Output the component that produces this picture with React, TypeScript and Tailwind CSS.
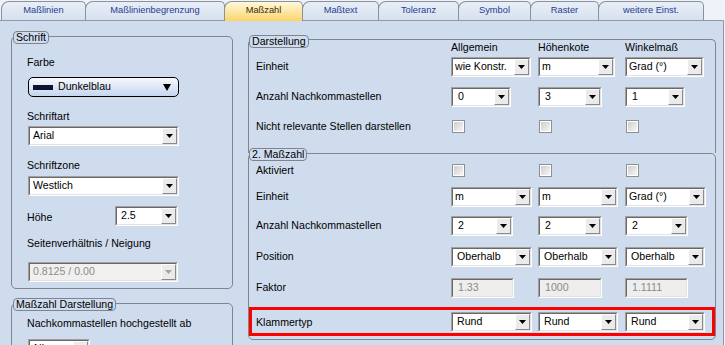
import React from 'react';

// --- small widgets ---
const Arrow: React.FC<{ disabled?: boolean }> = ({ disabled }) => (
  <svg width="7" height="4" viewBox="0 0 7 4">
    <path d="M0 0h7L3.5 4z" fill={disabled ? '#a5a5a5' : '#000'} />
  </svg>
);

interface SelectProps {
  value: string;
  className?: string;
  pad?: string;
  disabled?: boolean;
}

const Select: React.FC<SelectProps> = ({ value, className = '', pad = 'pl-[2px]', disabled = false }) => (
  <div className={`flex h-[20px] border border-t-[#a0a0a0] border-l-[#a0a0a0] border-r-white border-b-white ${className}`}>
    <div
      className={`flex min-w-0 flex-1 border border-t-[#696969] border-l-[#696969] border-r-[#e3e3e3] border-b-[#e3e3e3] ${
        disabled ? 'bg-[#f0f0f0]' : 'bg-white'
      }`}
    >
      <span className={`flex-1 truncate leading-[15px] ${pad} ${disabled ? 'text-[#8c8c8c]' : 'text-black'}`}>{value}</span>
      <span className="flex w-[15px] items-center justify-center border border-t-white border-l-white border-r-[#8a8a8a] border-b-[#8a8a8a] bg-[#ebebeb]">
        <Arrow disabled={disabled} />
      </span>
    </div>
  </div>
);

const TextBox: React.FC<{ value: string; className?: string }> = ({ value, className = '' }) => (
  <div className={`flex h-[20px] border border-t-[#a0a0a0] border-l-[#a0a0a0] border-r-white border-b-white ${className}`}>
    <div className="flex-1 border border-t-[#696969] border-l-[#696969] border-r-[#e3e3e3] border-b-[#e3e3e3] bg-[#eeeeee] pl-[5px] leading-[15px] text-[#8a8a8a]">
      {value}
    </div>
  </div>
);

const Check: React.FC = () => (
  <div className="ml-[1px] h-[13px] w-[13px] border border-[#8e8f8f] bg-white p-px">
    <div className="h-full w-full bg-linear-to-br from-[#cfcfcf] to-[#f6f6f6]" />
  </div>
);

const Legend: React.FC<{ children: React.ReactNode; className?: string }> = ({ children, className = '' }) => (
  <div className={`absolute h-[13px] rounded-[4px] border border-[#7d848e] bg-[#cfdcee] px-[2px] leading-[11px] text-black ${className}`}>
    {children}
  </div>
);

const Row: React.FC<{ label: string; children: React.ReactNode; className?: string }> = ({ label, children, className = '' }) => (
  <div className={`grid h-[21px] grid-cols-[195px_87px_87px_1fr] items-center ${className}`}>
    <span>{label}</span>
    {children}
  </div>
);

// --- tabs ---
const tabs = [
  { label: 'Maßlinien', w: 'w-[85px]' },
  { label: 'Maßlinienbegrenzung', w: 'w-[140px]' },
  { label: 'Maßzahl', w: 'w-[79px]', active: true },
  { label: 'Maßtext', w: 'w-[77px]' },
  { label: 'Toleranz', w: 'w-[81px]' },
  { label: 'Symbol', w: 'w-[73px]' },
  { label: 'Raster', w: 'w-[69px]' },
  { label: 'weitere Einst.', w: 'w-[106px]' },
];

export default function App() {
  return (
    <div className="h-[345px] w-[725px] overflow-hidden bg-[#eef3f9] font-['Liberation_Sans',Arial,sans-serif] text-[10.6px] text-black">
      {/* tab strip */}
      <div className="flex h-[20px] items-end pl-[1px]">
        {tabs.map((t) => (
          <div
            key={t.label}
            className={`${t.w} relative -mr-px flex items-center justify-center rounded-tl-[8px] rounded-tr-[5px] border border-b-0 border-[#8b929b] text-[9.3px] ${
              t.active
                ? 'z-10 mb-[-1px] h-[20px] bg-linear-to-b from-[#fff8da] to-[#fcd466] pb-[1px] text-[#3a2a0a]'
                : 'h-[19px] bg-linear-to-b from-[#e8eef7] to-[#d7e1ef] text-[#1f3d8f]'
            }`}
          >
            {t.label}
          </div>
        ))}
      </div>

      {/* page */}
      <div className="flex h-[325px] w-[724px] border-t border-r border-[#8e9aaa] bg-[#cfdcee]">
        {/* left column */}
        <div className="w-[233px] shrink-0 pl-[11px]">
          <div className="relative mt-[15px] h-[253px] rounded-[5px] border border-[#7e8690] pl-[15px] pt-[18px]">
            <Legend className="left-[1px] top-[-6px]">Schrift</Legend>
            <div className="h-[14px] leading-[14px]">Farbe</div>
            <div className="ml-[1px] mt-[8px] flex h-[20px] w-[151px] items-center rounded-[5px] border border-black bg-linear-to-b from-[#f7f9fd] to-[#c6d6ee] pl-[4px] pr-[7px]">
              <span className="h-[5px] w-[20px] bg-[#0b1333]" />
              <span className="ml-[5px] flex-1">Dunkelblau</span>
              <svg width="8" height="7" viewBox="0 0 8 7">
                <path d="M0 0h8L4 7z" fill="#000" />
              </svg>
            </div>
            <div className="mt-[12px] h-[14px] leading-[14px]">Schriftart</div>
            <Select value="Arial" className="ml-[1px] mt-[3px] w-[151px]" pad="pl-[3px]" />
            <div className="mt-[12px] h-[14px] leading-[14px]">Schriftzone</div>
            <Select value="Westlich" className="ml-[1px] mt-[4px] w-[151px]" pad="pl-[3px]" />
            <div className="mt-[10px] flex h-[20px] items-center">
              <span className="w-[88px] pt-[4px]">Höhe</span>
              <Select value="2.5" className="w-[63px]" pad="pl-[4px]" />
            </div>
            <div className="mt-[10px] h-[14px] leading-[14px]">Seitenverhältnis / Neigung</div>
            <Select value="0.8125 / 0.00" className="ml-[1px] mt-[12px] w-[150px]" pad="pl-[3px]" disabled />
          </div>

          <div className="relative mt-[14px] h-[60px] rounded-[5px] border border-[#7e8690] pl-[15px] pt-[12px]">
            <Legend className="left-[1px] top-[-6px]">Maßzahl Darstellung</Legend>
            <div className="h-[14px] leading-[14px]">Nachkommastellen hochgestellt ab</div>
            <Select value="Nie" className="ml-[1px] mt-[9px] w-[62px]" pad="pl-[4px]" />
          </div>
        </div>

        {/* right column */}
        <div className="ml-[15px] w-[468px] shrink-0">
          <div className="relative mt-[18px] h-[114px] rounded-t-[5px] border border-b-0 border-[#7e8690] pl-[7px]">
            <Legend className="left-0 top-[-5px]">Darstellung</Legend>
            <div className="grid h-[16px] grid-cols-[195px_87px_87px_1fr] items-center">
              <span />
              <span>Allgemein</span>
              <span>Höhenkote</span>
              <span>Winkelmaß</span>
            </div>
            <Row label="Einheit">
              <Select value="wie Konstr." className="w-[80px]" />
              <Select value="m" className="w-[77px]" />
              <Select value="Grad (°)" className="w-[79px]" />
            </Row>
            <Row label="Anzahl Nachkommastellen" className="mt-[9px]">
              <Select value="0" className="w-[60px]" pad="pl-[5px]" />
              <Select value="3" className="w-[64px]" pad="pl-[5px]" />
              <Select value="1" className="w-[60px]" pad="pl-[5px]" />
            </Row>
            <Row label="Nicht relevante Stellen darstellen" className="mt-[9px]">
              <Check />
              <Check />
              <Check />
            </Row>
          </div>

          <div className="relative rounded-[5px] border border-[#7e8690] pb-[3px]">
            <Legend className="left-0 top-[-6px]">2. Maßzahl</Legend>
            <Row label="Aktiviert" className="mt-[6px] pl-[7px]">
              <Check />
              <Check />
              <Check />
            </Row>
            <Row label="Einheit" className="mt-[5px] pl-[7px]">
              <Select value="m" className="w-[81px]" />
              <Select value="m" className="w-[80px]" />
              <Select value="Grad (°)" className="w-[81px]" />
            </Row>
            <Row label="Anzahl Nachkommastellen" className="mt-[8px] pl-[7px]">
              <Select value="2" className="w-[62px]" pad="pl-[5px]" />
              <Select value="2" className="w-[64px]" pad="pl-[5px]" />
              <Select value="2" className="w-[63px]" pad="pl-[5px]" />
            </Row>
            <Row label="Position" className="mt-[10px] pl-[7px]">
              <Select value="Oberhalb" className="w-[81px]" pad="pl-[4px]" />
              <Select value="Oberhalb" className="w-[80px]" pad="pl-[4px]" />
              <Select value="Oberhalb" className="w-[80px]" pad="pl-[4px]" />
            </Row>
            <Row label="Faktor" className="mt-[10px] pl-[7px]">
              <TextBox value="1.33" className="w-[63px]" />
              <TextBox value="1000" className="w-[64px]" />
              <TextBox value="1.1111" className="w-[63px]" />
            </Row>
            <div className="mt-[9px] h-[29px] border-[3px] border-[#ff0000] pl-[4px]">
              <div className="grid h-full grid-cols-[195px_87px_87px_1fr] items-center">
                <span className="pt-[2px]">Klammertyp</span>
                <Select value="Rund" className="w-[81px]" pad="pl-[4px]" />
                <Select value="Rund" className="w-[80px]" pad="pl-[4px]" />
                <Select value="Rund" className="w-[80px]" pad="pl-[4px]" />
              </div>
            </div>
          </div>
        </div>
      </div>
    </div>
  );
}
